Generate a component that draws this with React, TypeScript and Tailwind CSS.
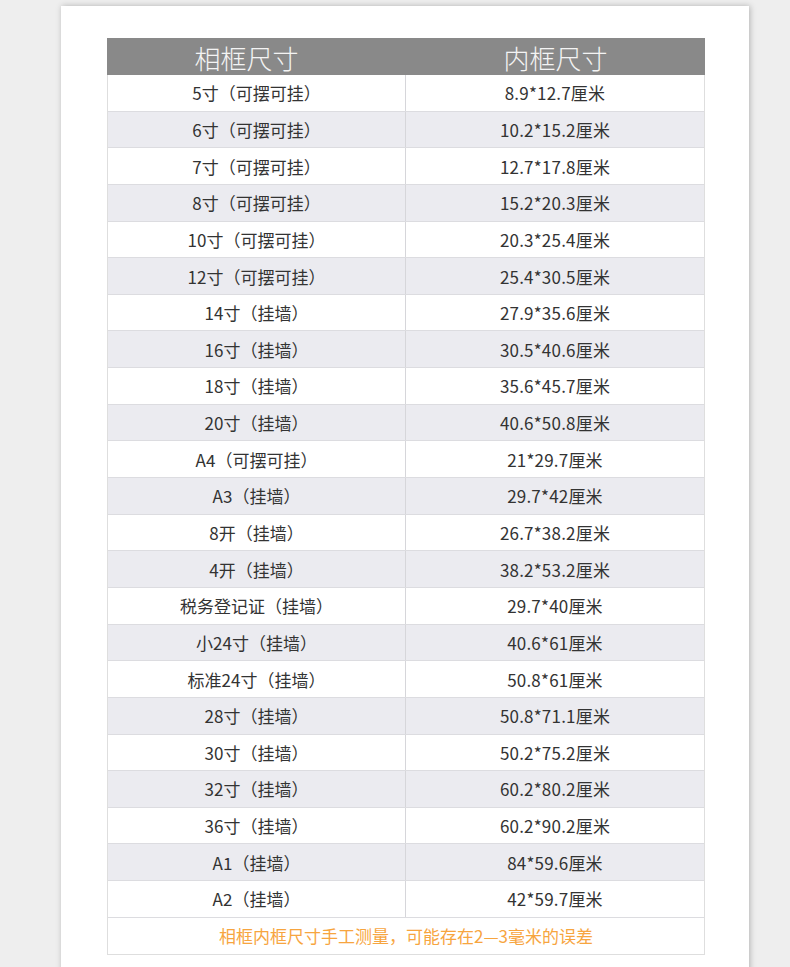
import React from 'react';

const rows: [string, string][] = [
  ['5寸（可摆可挂）', '8.9*12.7厘米'],
  ['6寸（可摆可挂）', '10.2*15.2厘米'],
  ['7寸（可摆可挂）', '12.7*17.8厘米'],
  ['8寸（可摆可挂）', '15.2*20.3厘米'],
  ['10寸（可摆可挂）', '20.3*25.4厘米'],
  ['12寸（可摆可挂）', '25.4*30.5厘米'],
  ['14寸（挂墙）', '27.9*35.6厘米'],
  ['16寸（挂墙）', '30.5*40.6厘米'],
  ['18寸（挂墙）', '35.6*45.7厘米'],
  ['20寸（挂墙）', '40.6*50.8厘米'],
  ['A4（可摆可挂）', '21*29.7厘米'],
  ['A3（挂墙）', '29.7*42厘米'],
  ['8开（挂墙）', '26.7*38.2厘米'],
  ['4开（挂墙）', '38.2*53.2厘米'],
  ['税务登记证（挂墙）', '29.7*40厘米'],
  ['小24寸（挂墙）', '40.6*61厘米'],
  ['标准24寸（挂墙）', '50.8*61厘米'],
  ['28寸（挂墙）', '50.8*71.1厘米'],
  ['30寸（挂墙）', '50.2*75.2厘米'],
  ['32寸（挂墙）', '60.2*80.2厘米'],
  ['36寸（挂墙）', '60.2*90.2厘米'],
  ['A1（挂墙）', '84*59.6厘米'],
  ['A2（挂墙）', '42*59.7厘米'],
];

const App: React.FC = () => {
  return (
    <div
      className="min-h-screen bg-[#eeeeee] pl-[61px] pr-[41px] pt-[6px] overflow-hidden"
      style={{ fontFamily: '"Noto Sans CJK SC", "Noto Sans", sans-serif' }}
    >
      <div className="bg-white w-[688px] h-[980px] shadow-[1px_0_6px_rgba(0,0,0,0.25)] pt-[32px] pl-[46px]">
        <div className="w-[598px]">
          {/* 表头 */}
          <div className="grid grid-cols-2 h-[37px] bg-[#898989] text-[#f4f4f4] text-[26px] font-light">
            <div className="flex items-center justify-center leading-none pr-[20px] pt-[2px]">相框尺寸</div>
            <div className="flex items-center justify-center leading-none pt-[2px]">内框尺寸</div>
          </div>

          <div className="border-l border-r border-[#dedede]">
            {rows.map(([size, inner], i) => (
              <div
                key={size}
                className={`grid grid-cols-2 h-[36.65px] border-b border-[#dcdce0] text-[17px] text-[#333333] ${
                  i % 2 === 1 ? 'bg-[#ebebf0]' : 'bg-white'
                }`}
              >
                <div className="flex items-center justify-center border-r border-[#d6d6da] leading-none">
                  {size}
                </div>
                <div className="flex items-center justify-center leading-none tracking-[0.2px]">{inner}</div>
              </div>
            ))}
            <div className="h-[37px] flex items-center justify-center border-b border-[#dedede] text-[17px] text-[#f7a53f] leading-none">
              相框内框尺寸手工测量，可能存在2—3毫米的误差
            </div>
          </div>
        </div>
      </div>
    </div>
  );
};

export default App;
